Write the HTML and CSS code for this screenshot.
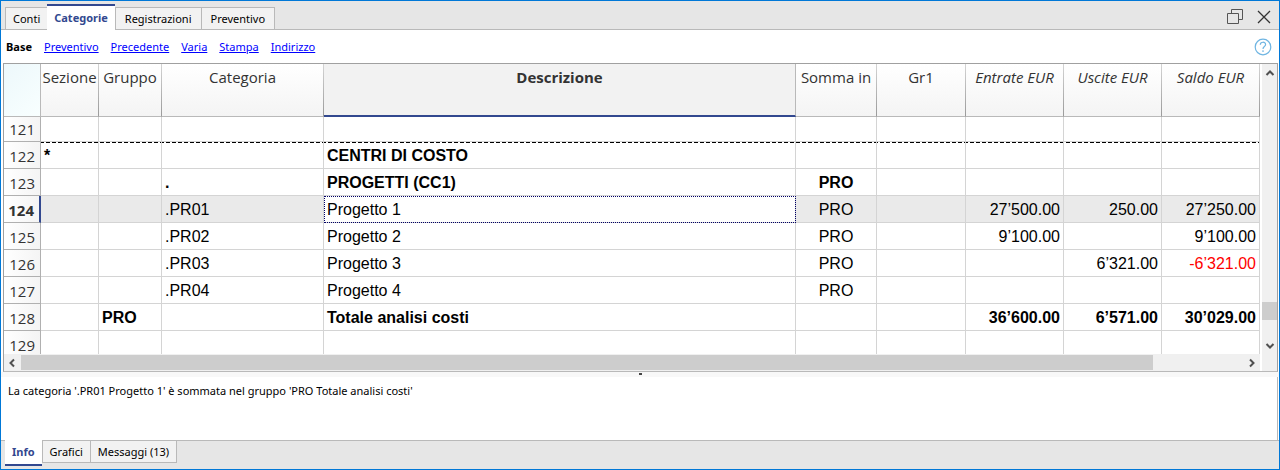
FILE: index.html
```html
<!DOCTYPE html>
<html lang="it">
<head>
<meta charset="utf-8">
<title>Categorie</title>
<link rel="stylesheet" href="styles.css">
</head>
<body>
<main class="window">
  <header class="tabbar">
    <div class="tabs" role="tablist">
      <button class="tab" role="tab">Conti</button>
      <button class="tab tab-active" role="tab" aria-selected="true">Categorie</button>
      <button class="tab tab-wide" role="tab">Registrazioni</button>
      <button class="tab tab-wide" role="tab">Preventivo</button>
    </div>
    <div class="window-actions">
      <button class="icon-button" aria-label="Ripristina">
        <svg width="16" height="16" viewBox="0 0 16 16" fill="none" stroke="#555"><path d="M.5 4.500h11v10H.5zM4.500 4V.5h11v10H12"/></svg>
      </button>
      <button class="icon-button" aria-label="Chiudi">
        <svg width="14" height="14" viewBox="0 0 14 14" fill="none" stroke="#333" stroke-width="1.300"><path d="M1 1l12 12M13 1L1 13"/></svg>
      </button>
    </div>
  </header>

  <nav class="views">
    <span class="view-current">Base</span>
    <a href="#preventivo">Preventivo</a>
    <a href="#precedente">Precedente</a>
    <a href="#varia">Varia</a>
    <a href="#stampa">Stampa</a>
    <a href="#indirizzo">Indirizzo</a>
    <button class="icon-button help" aria-label="Aiuto">
      <svg width="18" height="18" viewBox="0 0 18 18" fill="none" stroke="#6fb5e2" stroke-width="1.200"><circle cx="9" cy="9" r="7.800"/><path d="M6.300 6.800C6.300 3.400 11.600 3.400 11.600 6.600C11.600 8.700 9 8.500 9 11M9 12.300V14"/></svg>
    </button>
  </nav>

  <section class="grid-pane">
    <div class="grid-view">
      <table class="sheet">
        <colgroup>
          <col class="c-num"><col class="c-sezione"><col class="c-gruppo"><col class="c-categoria"><col><col class="c-somma"><col class="c-gr"><col class="c-amount"><col class="c-amount"><col class="c-amount">
        </colgroup>
        <thead>
          <tr><td class="corner"></td><th>Sezione</th><th>Gruppo</th><th>Categoria</th><th class="sorted">Descrizione</th><th>Somma in</th><th>Gr1</th><th class="computed">Entrate EUR</th><th class="computed">Uscite EUR</th><th class="computed">Saldo EUR</th></tr>
        </thead>
        <tbody>
          <tr class="first"><th>121</th><td></td><td></td><td></td><td></td><td></td><td></td><td></td><td></td><td></td></tr>
          <tr class="bold cut"><th>122</th><td>*</td><td></td><td></td><td>CENTRI DI COSTO</td><td></td><td></td><td></td><td></td><td></td></tr>
          <tr class="bold"><th>123</th><td></td><td></td><td>.</td><td>PROGETTI (CC1)</td><td class="mid">PRO</td><td></td><td></td><td></td><td></td></tr>
          <tr class="current"><th>124</th><td></td><td></td><td>.PR01</td><td class="focus">Progetto 1</td><td class="mid">PRO</td><td></td><td class="num">27’500.00</td><td class="num">250.00</td><td class="num">27’250.00</td></tr>
          <tr><th>125</th><td></td><td></td><td>.PR02</td><td>Progetto 2</td><td class="mid">PRO</td><td></td><td class="num">9’100.00</td><td></td><td class="num">9’100.00</td></tr>
          <tr><th>126</th><td></td><td></td><td>.PR03</td><td>Progetto 3</td><td class="mid">PRO</td><td></td><td></td><td class="num">6’321.00</td><td class="num negative">-6’321.00</td></tr>
          <tr><th>127</th><td></td><td></td><td>.PR04</td><td>Progetto 4</td><td class="mid">PRO</td><td></td><td></td><td></td><td></td></tr>
          <tr class="bold"><th>128</th><td></td><td>PRO</td><td></td><td>Totale analisi costi</td><td></td><td></td><td class="num">36’600.00</td><td class="num">6’571.00</td><td class="num">30’029.00</td></tr>
          <tr><th>129</th><td></td><td></td><td></td><td></td><td></td><td></td><td></td><td></td><td></td></tr>
        </tbody>
      </table>
    </div>
    <div class="vscroll">
      <svg class="arrow" width="10" height="8" viewBox="0 0 10 8" fill="none" stroke="#505050" stroke-width="2"><path d="M1.500 6L5 2.500L8.500 6"/></svg>
      <div class="vtrack"><div class="vthumb"></div></div>
      <svg class="arrow" width="10" height="8" viewBox="0 0 10 8" fill="none" stroke="#505050" stroke-width="2"><path d="M1.500 2L5 5.500L8.500 2"/></svg>
    </div>
    <div class="hscroll">
      <svg class="arrow" width="8" height="10" viewBox="0 0 8 10" fill="none" stroke="#505050" stroke-width="2"><path d="M6 1.500L2.500 5L6 8.500"/></svg>
      <div class="htrack"><div class="hthumb"></div></div>
      <svg class="arrow" width="8" height="10" viewBox="0 0 8 10" fill="none" stroke="#505050" stroke-width="2"><path d="M2 1.500L5.500 5L2 8.500"/></svg>
    </div>
  </section>

  <div class="splitter"><span class="grip"></span></div>

  <section class="info">La categoria '.PR01 Progetto 1' è sommata nel gruppo 'PRO Totale analisi costi'</section>

  <footer class="bottombar">
    <div class="tabs tabs-bottom" role="tablist">
      <button class="tab tab-active" role="tab" aria-selected="true">Info</button>
      <button class="tab" role="tab">Grafici</button>
      <button class="tab" role="tab">Messaggi (13)</button>
    </div>
  </footer>
</main>
</body>
</html>
```
FILE: styles.css
```css
* { box-sizing: border-box; }

body {
  margin: 0;
  font: 11px/16px "Noto Sans", "Open Sans", sans-serif;
  color: #000;
}

.window {
  display: flex;
  flex-direction: column;
  height: 100vh;
  border: 1px solid #0078d7;
  background: #fff;
}

button { font: inherit; color: inherit; }

.tabbar {
  display: flex;
  justify-content: space-between;
  height: 29px;
  padding: 3px 8px 0 4px;
  background: #e6e6e6;
  box-shadow: inset 0 -1px #b9b9b9;
}

.tabs { display: flex; align-items: flex-end; }

.tab {
  height: 23px;
  padding: 0 7px;
  border: 1px solid #b9b9b9;
  border-right-width: 0;
  background: #f2f2f2;
}

.tab:last-child { border-right-width: 1px; }
.tab-wide { padding: 0 9px; }

.tab-active {
  height: 26px;
  border-width: 2px 0 0;
  border-color: #32488f;
  background: #fff;
  color: #32488f;
  font-weight: 700;
}

.window-actions { display: flex; align-items: center; gap: 14px; }

.icon-button {
  display: flex;
  padding: 0;
  border: 0;
  background: none;
}

.views {
  display: flex;
  align-items: center;
  gap: 12px;
  height: 33px;
  padding: 0 7px 0 5px;
}

.view-current { font-weight: 700; }
.views a { color: #00f; }
.help { margin-left: auto; }

.grid-pane {
  flex: 1;
  min-height: 0;
  display: grid;
  grid-template: minmax(0, 1fr) 17px / minmax(0, 1fr) 17px;
  margin: 0 1px 0 2px;
  border: 1px solid #a0a0a0;
  border-bottom-color: #b9b9b9;
}

.grid-view { overflow: hidden; }

.sheet {
  width: 100%;
  table-layout: fixed;
  border-collapse: separate;
  border-spacing: 0;
  font: 16px/24px "Liberation Sans", Arial, sans-serif;
}

.c-num { width: 37px; }
.c-sezione { width: 58px; }
.c-gruppo { width: 63px; }
.c-categoria { width: 162px; }
.c-somma { width: 81px; }
.c-gr { width: 89px; }
.c-amount { width: 98px; }

.sheet td, .sheet th {
  height: 27px;
  padding: 2px 3px 0;
  border: 0 solid #d4d4d4;
  border-width: 0 1px 1px 0;
  white-space: nowrap;
}

.sheet th {
  padding: 3px 0 0;
  border-color: #b0b0b0;
  color: #333;
  font: 15px/20px "Open Sans", "Noto Sans", sans-serif;
}

.sheet thead th, .sheet .corner {
  height: 53px;
  border-bottom-color: #b9b9b9;
  vertical-align: top;
}

.sheet thead th {
  background: linear-gradient(#d4d4d4, #999) right / 1px 100% no-repeat border-box, linear-gradient(#fff, #f4f4f4);
  border-right-color: transparent;
}

.sheet .corner { background: linear-gradient(135deg, #edf8fb, #f8ffff); border-right-color: #b9b9b9; }

.sheet thead .sorted {
  border-bottom: 2px solid #32488f;
  background: #f2f2f2;
  border-right-color: #b9b9b9;
  font-weight: 700;
}

.sheet thead .computed { font-style: italic; }
.sheet tbody th { padding: 1px 5px 0 0; background: linear-gradient(90deg, #fff, #f4f4f4); text-align: right; }
.sheet .first th, .sheet .first td { height: 25px; padding-top: 0; }
.bold td { font-weight: 700; }
.cut { background: repeating-linear-gradient(90deg, #000 0 4px, transparent 4px 6px) top / 100% 1px no-repeat; }
.current td { background: #eaeaea; }
.sheet .current th { border-right: 2px solid #32488f; font-weight: 700; }
.sheet .current .focus { background: #fff; outline: 1px dotted #000066; outline-offset: -1px; }
.mid { text-align: center; }
.sheet .num { text-align: right; }
.negative { color: #f00; }

.vscroll {
  grid-row: 1 / 3;
  grid-column: 2;
  display: flex;
  flex-direction: column;
  align-items: center;
  padding: 5px 0 21px;
  border: 1px solid #fff;
  border-width: 0 0 0 2px;
  background: #f0f0f0;
}

.arrow { flex: none; }

.vtrack {
  flex: 1;
  display: flex;
  align-items: flex-end;
  align-self: stretch;
  padding-bottom: 22px;
}

.vthumb { flex: 1; height: 18px; background: #cdcdcd; }

.hscroll {
  display: flex;
  align-items: center;
  padding: 0 4px;
  background: #f0f0f0;
}

.htrack { flex: 1; padding: 0 95px 0 5px; }
.hthumb { height: 15px; background: #cdcdcd; }

.splitter {
  display: flex;
  justify-content: center;
  height: 5px;
  background: #f8f8f8;
}

.grip { width: 3px; height: 2px; margin-top: 1px; background: #444; }

.info {
  height: 63px;
  margin: 0 1px 0 0;
  padding: 6px 7px;
  border: 1px solid #b9b9b9;
  border-width: 0 1px 0 0;
}

.bottombar {
  height: 29px;
  padding: 0 4px;
  background: #e6e6e6;
  box-shadow: inset 0 1px #b9b9b9;
}

.tabs-bottom { align-items: flex-start; }
.tabs-bottom .tab-active { border-width: 0 0 2px; }
```
